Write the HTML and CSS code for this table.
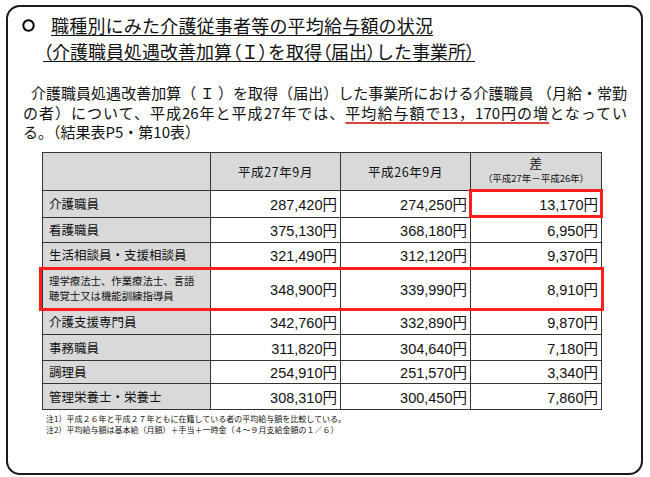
FILE: index.html
```html
<!DOCTYPE html>
<html lang="ja">
<head>
<meta charset="utf-8">
<link rel="stylesheet" href="styles.css">
</head>
<body>
<div class="frame">
  <div class="title">
    <div class="title-row">
      <svg class="bullet" width="13" height="13" viewBox="0 0 13 13"><circle cx="6.5" cy="6.5" r="5.2" fill="none" stroke="#000" stroke-width="2"/></svg>
      <span class="ul t1">職種別にみた介護従事者等の平均給与額の状況</span>
    </div>
    <div class="title-row second">
      <span class="ul t2"><span class="pp">（</span>介護職員処遇改善加算<span class="pp">（</span>Ｉ<span class="pp">）</span>を取得<span class="pp">（</span>届出<span class="pp">）</span>した事業所<span class="pp">）</span></span>
    </div>
  </div>

  <div class="para">
    <span class="line first">介護職員処遇改善加算（ Ｉ ）を取得（届出）した事業所における介護職員 （月給・常勤</span>
    <span class="line">の者）について、平成26年と平成27年では、<span class="red-ul">平均給与額で13，170円の増</span>となってい</span>
    <span class="line last">る。（結果表P5・第10表）</span>
  </div>

  <div class="table-wrap">
    <table class="pay">
      <colgroup>
        <col class="c1"><col class="c2"><col class="c3"><col class="c4">
      </colgroup>
      <thead>
        <tr class="head">
          <th></th>
          <th>平成27年9月</th>
          <th>平成26年9月</th>
          <th><span class="diff">差</span><span class="diff-sub">（平成27年－平成26年）</span></th>
        </tr>
      </thead>
      <tbody>
        <tr class="r27"><td class="lab">介護職員</td><td class="num">287,420<span class="yen">円</span></td><td class="num">274,250<span class="yen">円</span></td><td class="num">13,170<span class="yen">円</span></td></tr>
        <tr class="r25"><td class="lab">看護職員</td><td class="num">375,130<span class="yen">円</span></td><td class="num">368,180<span class="yen">円</span></td><td class="num">6,950<span class="yen">円</span></td></tr>
        <tr class="r25"><td class="lab">生活相談員・支援相談員</td><td class="num">321,490<span class="yen">円</span></td><td class="num">312,120<span class="yen">円</span></td><td class="num">9,370<span class="yen">円</span></td></tr>
        <tr class="r41"><td class="lab small"><span class="ll">理学療法士、作業療法士、言語</span><span class="ll">聴覚士又は機能訓練指導員</span></td><td class="num">348,900<span class="yen">円</span></td><td class="num">339,990<span class="yen">円</span></td><td class="num">8,910<span class="yen">円</span></td></tr>
        <tr class="r25"><td class="lab">介護支援専門員</td><td class="num">342,760<span class="yen">円</span></td><td class="num">332,890<span class="yen">円</span></td><td class="num">9,870<span class="yen">円</span></td></tr>
        <tr class="r26"><td class="lab">事務職員</td><td class="num">311,820<span class="yen">円</span></td><td class="num">304,640<span class="yen">円</span></td><td class="num">7,180<span class="yen">円</span></td></tr>
        <tr class="r24"><td class="lab">調理員</td><td class="num">254,910<span class="yen">円</span></td><td class="num">251,570<span class="yen">円</span></td><td class="num">3,340<span class="yen">円</span></td></tr>
        <tr class="r26"><td class="lab">管理栄養士・栄養士</td><td class="num">308,310<span class="yen">円</span></td><td class="num">300,450<span class="yen">円</span></td><td class="num">7,860<span class="yen">円</span></td></tr>
      </tbody>
    </table>
    <div class="hl hl-cell"></div>
    <div class="hl hl-row"></div>
  </div>

  <div class="notes">
    <div>注1）平成２６年と平成２７年ともに在籍している者の平均給与額を比較している。</div>
    <div>注2）平均給与額は基本給（月額）＋手当＋一時金（４～９月支給金額の１／６）</div>
  </div>
</div>
</body>
</html>
```

FILE: styles.css
```css
html, body {
  margin: 0;
  padding: 0;
  background: #fff;
}

body {
  font-family: "Noto Sans CJK JP", "Noto Sans", sans-serif;
  color: #111;
}

.frame {
  box-sizing: border-box;
  width: 637px;
  height: 470px;
  margin: 5px 0 0 6px;
  border: 2px solid #1a1a1a;
  border-radius: 14px;
  display: flex;
  flex-direction: column;
}

.title {
  display: flex;
  flex-direction: column;
  margin-top: 9px;
}

.title-row {
  display: flex;
  align-items: center;
  height: 20px;
  padding-left: 14px;
}

.title-row.second {
  padding-left: 35px;
  margin-top: 6px;
}

.bullet {
  display: block;
  margin-right: 16px;
  margin-top: -1px;
}

.ul {
  display: inline-block;
  font-size: 18px;
  line-height: 18px;
  border-bottom: 1px solid #111;
  padding-bottom: 1px;
  white-space: nowrap;
}

.t1 {
  letter-spacing: 0.2px;
}

.pp {
  font-feature-settings: "palt";
}

.para {
  margin-top: 21px;
  padding-left: 15px;
  width: 604px;
  font-size: 15px;
  line-height: 19.5px;
}

.line {
  display: block;
  white-space: nowrap;
  text-align: justify;
  text-align-last: justify;
}

.line.first {
  padding-left: 8px;
}

.line.last {
  text-align: left;
  text-align-last: left;
}

.red-ul {
  text-decoration: underline;
  text-decoration-color: #e0403a;
  text-decoration-thickness: 2px;
  text-underline-offset: 3px;
}

.table-wrap {
  position: relative;
  margin-top: 10px;
  margin-left: 34px;
  width: 560px;
}

.pay {
  border-collapse: collapse;
  table-layout: fixed;
  width: 560px;
}

.c1 { width: 168px; }
.c2 { width: 130px; }
.c3 { width: 130px; }
.c4 { width: 131px; }

.pay th,
.pay td {
  border: 1px solid #333;
  padding: 0;
}

.pay th {
  background: #d9d9d9;
  font-weight: normal;
  font-size: 12.5px;
  height: 37px;
  text-align: center;
  letter-spacing: 0.6px;
}

.diff {
  display: block;
  font-size: 13px;
  line-height: 14px;
  margin-top: -3px;
}

.diff-sub {
  display: block;
  font-size: 9.5px;
  line-height: 12px;
  margin-top: 2px;
  letter-spacing: 0;
  font-feature-settings: "palt";
}

.lab {
  background: #d9d9d9;
  font-size: 12.5px;
  padding-left: 6px !important;
  white-space: nowrap;
}

.lab.small {
  font-size: 10.4px;
  line-height: 12.5px;
  padding-top: 1px !important;
}

.ll {
  display: block;
  line-height: 12.5px;
}

.ll + .ll {
  margin-top: 2px;
}

.num {
  text-align: right;
  padding-right: 3px !important;
  font-family: "Liberation Sans", "Noto Sans CJK JP", sans-serif;
  font-size: 14.5px;
  white-space: nowrap;
}

.yen {
  font-family: "Noto Sans CJK JP", sans-serif;
  font-size: 14.5px;
}

.r27 td { height: 26px; }
.r25 td { height: 24px; }
.r26 td { height: 25px; }
.r24 td { height: 22px; }
.r41 td { height: 40px; }

.hl {
  position: absolute;
  box-sizing: border-box;
  border: 3px solid #ff1e1e;
}

.hl-cell {
  left: 427px;
  top: 37px;
  width: 134px;
  height: 29px;
}

.hl-row {
  left: -3px;
  top: 115px;
  width: 565px;
  height: 44px;
}

.notes {
  margin-top: 3px;
  margin-left: 38px;
  font-size: 8px;
  line-height: 11.5px;
  white-space: nowrap;
}
```
